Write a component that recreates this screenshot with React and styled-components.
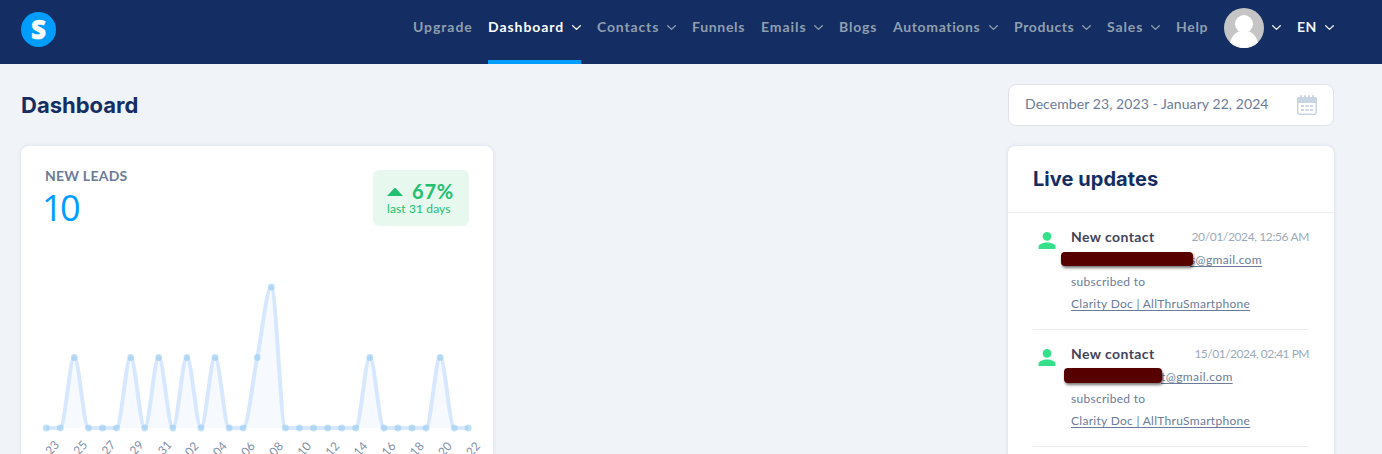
import React from "react";
import styled, { createGlobalStyle } from "styled-components";

const Global = createGlobalStyle`
  * { box-sizing: border-box; }
  html, body { margin: 0; height: 100%; overflow: hidden; background: #f0f3f8; }
  body { font-family: Lato, "Liberation Sans", sans-serif; color: #6b7c98; }
  #root { height: 100%; }
`;

const Page = styled.div`
  height: 454px;
  overflow: hidden;
`;

const Header = styled.header`
  height: 64px;
  background: #142d63;
  display: flex;
  justify-content: space-between;
  padding: 0 48px 0 21px;
`;

const Logo = styled.svg`
  width: 35px;
  height: 35px;
  margin-top: 12px;
`;

const Nav = styled.nav`
  display: flex;
  gap: 16px;
  height: 64px;
`;

const NavItem = styled.a`
  display: flex;
  align-items: center;
  gap: 8px;
  height: 64px;
  padding-bottom: 5px;
  border-bottom: 4px solid ${(p) => (p.$active ? "#009dff" : "transparent")};
  color: ${(p) => (p.$bright ? "#f0f3fa" : p.$active ? "#ffffff" : "#8f9fae")};
`;

const NavLabel = styled.span`
  width: ${(p) => p.$w}px;
  margin-bottom: 2px;
  font-size: 14px;
  font-weight: 700;
  line-height: 20px;
  letter-spacing: ${(p) => p.$ls}px;
  white-space: nowrap;
`;

const ChevronSvg = styled.svg`
  width: 9px;
  height: 6px;
  flex: none;
`;

const Avatar = styled.svg`
  width: 40px;
  height: 40px;
`;

const TitleBar = styled.div`
  height: 82px;
  padding: 20px 48px 0 21px;
  display: flex;
  justify-content: space-between;
`;

const Title = styled.h1`
  margin: 0;
  font: 700 22px/42px Inter, sans-serif;
  color: #142d63;
`;

const DatePicker = styled.div`
  width: 326px;
  height: 42px;
  padding: 0 16px;
  display: flex;
  align-items: center;
  justify-content: space-between;
  background: #fff;
  border: 1px solid #dfe3e8;
  border-radius: 8px;
`;

const DateText = styled.span`
  margin-bottom: 2px;
  font-size: 14px;
  line-height: 20px;
  letter-spacing: 0.08px;
  white-space: nowrap;
`;

const Columns = styled.main`
  display: flex;
  justify-content: space-between;
  align-items: flex-start;
  padding: 0 48px 0 21px;
`;

const Card = styled.section`
  width: ${(p) => p.$w}px;
  height: 400px;
  background: #fff;
  border-radius: 8px;
  box-shadow: 0 0 4px rgba(40, 70, 120, 0.12);
`;

const LeadsHead = styled.div`
  display: flex;
  justify-content: space-between;
  padding: 24px 24px 0;
  height: 104px;
`;

const LeadsLabel = styled.div`
  font-size: 14px;
  font-weight: 700;
  line-height: 12px;
  letter-spacing: 0.25px;
`;

const LeadsValue = styled.div`
  margin: 2px 0 0 -3px;
  font-family: "Open Sans", sans-serif;
  font-size: 36px;
  line-height: 48px;
  letter-spacing: -2.5px;
  color: #009dff;
`;

const Badge = styled.div`
  width: 96px;
  height: 56px;
  padding: 11px 14px;
  border-radius: 6px;
  background: #e7f8ef;
  color: #20c070;
`;

const BadgeTop = styled.div`
  display: flex;
  align-items: center;
  gap: 9px;
  font-size: 20px;
  font-weight: 700;
  line-height: 21px;
  letter-spacing: 0.8px;
`;

const Triangle = styled.svg`
  width: 16px;
  height: 8px;
`;

const BadgeNote = styled.div`
  font-size: 12px;
  line-height: 14px;
  letter-spacing: 0.12px;
  white-space: nowrap;
`;

const ChartSvg = styled.svg`
  display: block;
  width: 472px;
  height: 230px;
`;

const AxisLabel = styled.text`
  font: 400 12px Lato, sans-serif;
  fill: #8090a8;
`;

const UpdatesTitle = styled.h2`
  margin: 0;
  height: 67px;
  padding: 0 25px;
  border-bottom: 1px solid #eaedf1;
  font: 700 20px/66px Inter, sans-serif;
  letter-spacing: 0.05px;
  color: #142d63;
`;

const Update = styled.article`
  display: flex;
  margin: 0 25px;
  height: 117px;
  padding: 13px 0 0 5px;
  border-bottom: 1px solid #ebebee;
`;

const PersonIcon = styled.svg`
  width: 18px;
  height: 17px;
  margin-top: 6px;
  margin-right: 15px;
  flex: none;
`;

const UpdateBody = styled.div`
  flex: 1;
  font-size: 12px;
  line-height: 22px;
  letter-spacing: 0.28px;
`;

const UpdateTop = styled.div`
  display: flex;
  justify-content: space-between;
  height: 23px;
`;

const UpdateName = styled.strong`
  font-size: 14px;
  font-weight: 700;
  line-height: 21px;
  letter-spacing: 0.42px;
  color: #42445a;
`;

const UpdateTime = styled.time`
  line-height: 21px;
  letter-spacing: ${(p) => p.$ls}px;
  color: #9caab9;
`;

const Line = styled.div`
  display: flex;
  height: 22px;
`;

const Redaction = styled.span`
  position: relative;
  z-index: 1;
  flex: none;
  width: ${(p) => p.$w}px;
  height: ${(p) => p.$h}px;
  margin: ${(p) => p.$top}px ${(p) => p.$overlap}px 0 ${(p) => p.$shift}px;
  border-radius: 4px;
  background: #560000;
  box-shadow: 1px 2px 3px rgba(0, 0, 0, 0.55);
`;

const Link = styled.a`
  text-decoration: underline;
  text-underline-offset: 1.5px;
  letter-spacing: ${(p) => p.$ls}px;
  white-space: nowrap;
`;

const Chevron = () => (
  <ChevronSvg viewBox="0 0 9 6">
    <path d="M.7 .7 4.5 4.4 8.3 .7" fill="none" stroke="currentColor" strokeWidth="1.3" strokeLinecap="round" strokeLinejoin="round" />
  </ChevronSvg>
);

const links = [
  { label: "Upgrade", w: 59, ls: 0.93 },
  { label: "Dashboard", w: 76, ls: 0.95, menu: true, active: true },
  { label: "Contacts", w: 62, ls: 0.85, menu: true },
  { label: "Funnels", w: 53, ls: 0.7 },
  { label: "Emails", w: 45, ls: 0.95, menu: true },
  { label: "Blogs", w: 38, ls: 0.8 },
  { label: "Automations", w: 88, ls: 0.65, menu: true },
  { label: "Products", w: 60, ls: 0.6, menu: true },
  { label: "Sales", w: 36, ls: 0.9, menu: true },
  { label: "Help", w: 32, ls: 0.7 },
];

const leads = [0, 0, 1, 0, 0, 0, 1, 0, 1, 0, 1, 0, 1, 0, 0, 1, 2, 0, 0, 0, 0, 0, 0, 1, 0, 0, 0, 0, 1, 0, 0];
const STEP = 14.07;
const points = leads.map((v, i) => [25.2 + i * STEP, 178 - v * 70.5]);

// Monotone cubic interpolation through the daily values.
function monotonePath(pts) {
  const slope = (i) => (pts[i + 1][1] - pts[i][1]) / STEP;
  const tangent = (i) => {
    if (i === 0 || i === pts.length - 1) return 0;
    const a = slope(i - 1);
    const b = slope(i);
    return a * b <= 0 ? 0 : (2 * a * b) / (a + b);
  };
  let d = `M${pts[0][0]} ${pts[0][1]}`;
  for (let i = 0; i < pts.length - 1; i++) {
    const [x0, y0] = pts[i];
    const [x1, y1] = pts[i + 1];
    const h = STEP / 3;
    d += `C${x0 + h} ${y0 + tangent(i) * h} ${x1 - h} ${y1 - tangent(i + 1) * h} ${x1} ${y1}`;
  }
  return d;
}

function LeadsChart() {
  const path = monotonePath(points);
  return (
    <ChartSvg viewBox="0 0 472 230">
      <path d={`${path}V178H25.2Z`} fill="#f6faff" />
      <path d={path} fill="none" stroke="#d7e8fe" strokeWidth="4" strokeLinejoin="round" />
      {points.map(([x, y], i) => (
        <circle key={i} cx={x} cy={y} r="3.4" fill="#88c4ec" fillOpacity="0.5" />
      ))}
      {points.map(([x], i) => {
        if (i % 2) return null;
        const day = 23 + i;
        const text = day > 31 ? `Jan ${String(day - 31).padStart(2, "0")}` : `Dec ${day}`;
        return (
          <AxisLabel key={i} textAnchor="middle" transform={`translate(${x + 1} ${209.5}) rotate(-48)`}>
            {text}
          </AxisLabel>
        );
      })}
    </ChartSvg>
  );
}

const updates = [
  { time: "20/01/2024, 12:56 AM", timeLs: -0.38, email: "s@gmail.com", emailLs: 0.35, w: 132, h: 14, top: 3, shift: -10, overlap: -3 },
  { time: "15/01/2024, 02:41 PM", timeLs: -0.5, email: "t@gmail.com", emailLs: 0.4, w: 98, h: 15, top: 2, shift: -7, overlap: -1 },
];

export default function App() {
  return (
    <Page>
      <Global />
      <Header>
        <Logo viewBox="0 0 35 35">
          <circle cx="17.5" cy="17.5" r="17.5" fill="#009dff" />
          <text x="17.5" y="26.6" textAnchor="middle" fontFamily="Open Sans" fontWeight="800" fontSize="26" fill="#fff" stroke="#fff" strokeWidth="0.5">S</text>
        </Logo>
        <Nav>
          {links.map((l) => (
            <NavItem key={l.label} $active={l.active}>
              <NavLabel $w={l.w} $ls={l.ls}>{l.label}</NavLabel>
              {l.menu && <Chevron />}
            </NavItem>
          ))}
          <NavItem $bright>
            <Avatar viewBox="0 0 40 40">
              <clipPath id="face"><circle cx="20" cy="20" r="20" /></clipPath>
              <g clipPath="url(#face)">
                <rect width="40" height="40" fill="#c5c5c5" />
                <circle cx="20" cy="16" r="9" fill="#fff" />
                <path d="M5 40C6 30 10 25.500 15 23.500H25C30 25.500 34 30 35 40Z" fill="#fff" />
              </g>
            </Avatar>
            <Chevron />
          </NavItem>
          <NavItem $bright>
            <NavLabel $w={20} $ls={0.4}>EN</NavLabel>
            <Chevron />
          </NavItem>
        </Nav>
      </Header>

      <TitleBar>
        <Title>Dashboard</Title>
        <DatePicker>
          <DateText>December 23, 2023 - January 22, 2024</DateText>
          <svg width="20" height="20" viewBox="0 0 20 20">
            <g fill="none" stroke="#c9d5e3">
              <rect x="0.750" y="2.750" width="18.500" height="16.500" rx="2" strokeWidth="1.500" />
              <path d="M4 1V4M8 1V4M12 1V4M16 1V4" strokeWidth="2" strokeLinecap="round" />
            </g>
            <path d="M0 4.500Q0 2 2.500 2H17.500Q20 2 20 4.500V8H0Z" fill="#c9d5e3" />
            <path d="M4 10h3v2H4zM8.500 10h3v2h-3zM13 10h3v2h-3zM4 14h3v2H4zM8.500 14h3v2h-3zM13 14h3v2h-3z" fill="#c9d5e3" />
          </svg>
        </DatePicker>
      </TitleBar>

      <Columns>
        <Card $w={472}>
          <LeadsHead>
            <div>
              <LeadsLabel>NEW LEADS</LeadsLabel>
              <LeadsValue>10</LeadsValue>
            </div>
            <Badge>
              <BadgeTop>
                <Triangle viewBox="0 0 16 8"><path d="M0 8 7 .6Q8 -.4 9 .6L16 8Z" fill="#20c070" /></Triangle>
                67%
              </BadgeTop>
              <BadgeNote>last 31 days</BadgeNote>
            </Badge>
          </LeadsHead>
          <LeadsChart />
        </Card>

        <Card $w={326}>
          <UpdatesTitle>Live updates</UpdatesTitle>
          {updates.map((u) => (
            <Update key={u.time}>
              <PersonIcon viewBox="0 0 18 17">
                <circle cx="9" cy="4.400" r="4.300" fill="#34e08a" />
                <path d="M.5 17V15C.5 12 5 10.500 9 10.500S17.500 12 17.500 15V17Z" fill="#34e08a" />
              </PersonIcon>
              <UpdateBody>
                <UpdateTop>
                  <UpdateName>New contact</UpdateName>
                  <UpdateTime $ls={u.timeLs}>{u.time}</UpdateTime>
                </UpdateTop>
                <Line>
                  <Redaction $w={u.w} $h={u.h} $top={u.top} $shift={u.shift} $overlap={u.overlap} />
                  <Link $ls={u.emailLs}>{u.email}</Link>
                </Line>
                <Line>subscribed to</Line>
                <Line><Link $ls={0.29}>Clarity Doc | AllThruSmartphone</Link></Line>
              </UpdateBody>
            </Update>
          ))}
        </Card>
      </Columns>
    </Page>
  );
}
